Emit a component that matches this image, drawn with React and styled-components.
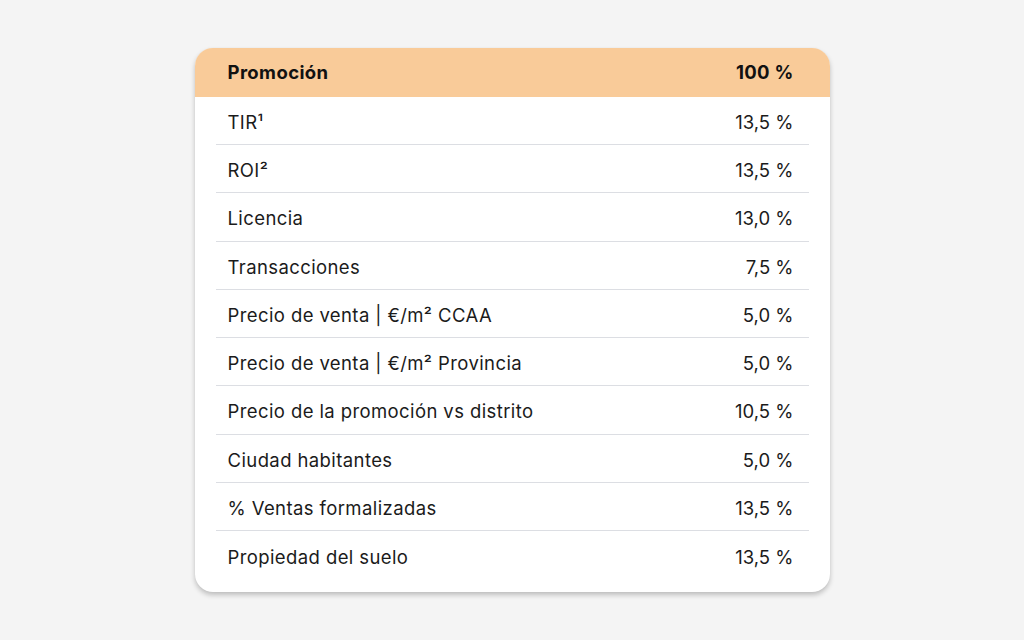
import React from "react";
import styled, { createGlobalStyle } from "styled-components";

const rows = [
    { label: "TIR¹", value: "13,5 %" },
    { label: "ROI²", value: "13,5 %" },
    { label: "Licencia", value: "13,0 %" },
    { label: "Transacciones", value: "7,5 %" },
    { label: "Precio de venta | €/m² CCAA", value: "5,0 %" },
    { label: "Precio de venta | €/m² Provincia", value: "5,0 %" },
    { label: "Precio de la promoción vs distrito", value: "10,5 %" },
    { label: "Ciudad habitantes", value: "5,0 %" },
    { label: "% Ventas formalizadas", value: "13,5 %" },
    { label: "Propiedad del suelo", value: "13,5 %" },
];

function App() {
    return <Page>
        <Global />
        <Card>
            <Header>
                <Label>Promoción</Label>
                <Value bold>100 %</Value>
            </Header>
            <Body>
                {rows.map((each, index) => <Row key={index} last={index === rows.length - 1}>
                    <Label>{each.label}</Label>
                    <Value>{each.value}</Value>
                </Row>)}
            </Body>
        </Card>
    </Page>
}

const Global = createGlobalStyle`
body {
    margin: 0;
    background: #f4f4f4;
    font-family: Inter, "Noto Sans", sans-serif;
    color: #1b1b1b;
}
`

const Page = styled.div`
height: 640px;
display: flex;
align-items: center;
justify-content: center;
`

const Card = styled.div`
width: 635px;
background: #fff;
border-radius: 18px;
overflow: hidden;
padding-bottom: 13px;
box-shadow: 0 3px 5px rgba(0, 0, 0, 0.22), 0 0 1px rgba(0, 0, 0, 0.08);
`

const Header = styled.div`
height: 49px;
background: #f9cb99;
display: flex;
align-items: center;
justify-content: space-between;
padding: 0 36px 0 33px;
font-size: 18.5px;
font-weight: 700;
color: #111;
`

const Body = styled.div`
padding: 0 21px 0 21px;
`

const Row = styled.div`
box-sizing: border-box;
height: 48.25px;
display: flex;
align-items: center;
justify-content: space-between;
padding: 3px 15px 0 12px;
font-size: 18.5px;
border-bottom: ${props => props.last ? "none" : "1px solid #dcdee3"};
`

const Label = styled.span`
letter-spacing: 0.4px;
`

const Value = styled.span`
letter-spacing: ${props => props.bold ? "0.3px" : "0"};
`

export default App;
